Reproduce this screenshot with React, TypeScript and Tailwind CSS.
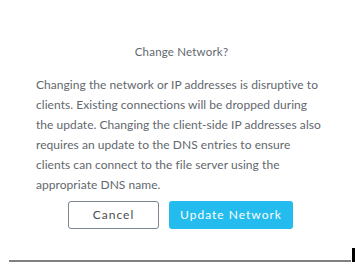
export default function App() {
  return (
    <div className="w-[355px] h-[265px] bg-white flex flex-col font-['Lato','Liberation_Sans',sans-serif] overflow-hidden">
      <div className="pt-[44px] text-center text-[11.5px] leading-[16px] text-[#62676e] pl-[8px] tracking-[0.2px]">Change Network?</div>

      <p className="mt-[15px] pl-[36px] text-[12px] leading-[20px] text-[#62676e] tracking-[0.05px]">
        Changing the network or IP addresses is disruptive to
        <br />
        clients. Existing connections will be dropped during
        <br />
        the update. Changing the client-side IP addresses also
        <br />
        requires an update to the DNS entries to ensure
        <br />
        clients can connect to the file server using the
        <br />
        appropriate DNS name.
      </p>

      <div className="mt-[6px] flex pl-[68px] gap-[10px]">
        <button className="w-[91px] h-[28px] rounded-[3px] border border-[#7d8590] bg-white text-[12px] tracking-[1px] text-[#4a4d52]">
          Cancel
        </button>
        <button className="w-[124px] h-[28px] rounded-[3px] bg-[#24bbef] text-[12px] tracking-[1px] text-white">
          Update Network
        </button>
      </div>

      <div className="mt-[19px] flex items-end pl-[9px] gap-[1px]">
        <div className="w-[342px] h-[2px] bg-[#808080]" />
        <div className="w-[3px] h-[14px] bg-black" />
      </div>
    </div>
  );
}
